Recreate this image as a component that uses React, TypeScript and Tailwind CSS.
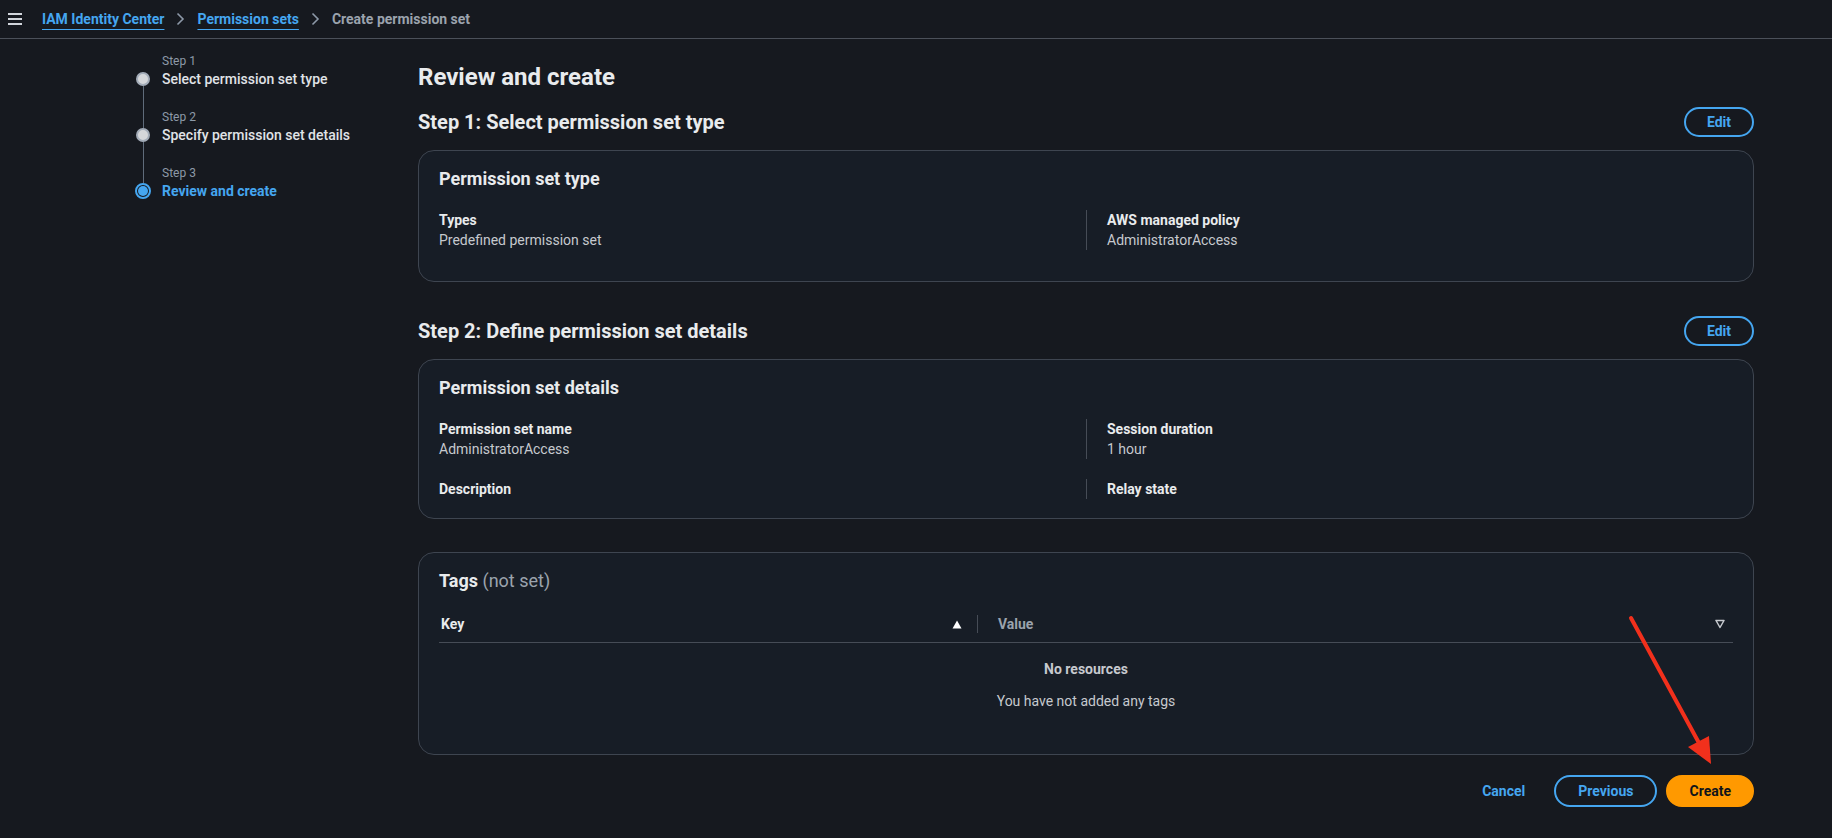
const steps = [
  { label: 'Step 1', title: 'Select permission set type', active: false },
  { label: 'Step 2', title: 'Specify permission set details', active: false },
  { label: 'Step 3', title: 'Review and create', active: true },
];

function Chevron() {
  return (
    <svg width="9" height="14" viewBox="0 0 9 14" className="mx-[12px]">
      <polyline points="1.5,1.5 7,7 1.5,12.5" fill="none" stroke="#8d99a8" strokeWidth="1.6" />
    </svg>
  );
}

function StepNav() {
  return (
    <div className="flex flex-col">
      {steps.map((s, i) => {
        const first = i === 0;
        const last = i === steps.length - 1;
        return (
          <div key={s.label} className="flex">
            <div className="w-4 flex flex-col items-center">
              <div className={`w-px h-4 ${first ? '' : 'bg-[#5f6b7a]'}`} />
              <div className="h-5 flex flex-col items-center">
                <div className={`w-px flex-1 ${first ? '' : 'bg-[#5f6b7a]'}`} />
                {s.active ? (
                  <div className="w-4 h-4 rounded-full border-2 border-[#45a6f0] flex items-center justify-center">
                    <div className="w-2.5 h-2.5 rounded-full bg-[#45a6f0]" />
                  </div>
                ) : (
                  <div className="w-[14px] h-[14px] rounded-full bg-[#d5d7da] border-2 border-[#a3acb8]" />
                )}
                <div className={`w-px flex-1 ${last ? '' : 'bg-[#5f6b7a]'}`} />
              </div>
              {!last && <div className="w-px flex-1 bg-[#5f6b7a]" />}
            </div>
            <div className={`pl-[11px] ${last ? '' : 'pb-5'}`}>
              <div className="text-xs leading-4 text-[#8d99a8]">{s.label}</div>
              <div
                className={`leading-5 ${s.active ? 'font-bold text-[#45a6f0]' : 'font-medium text-[#e0e3e7]'}`}
              >
                {s.title}
              </div>
            </div>
          </div>
        );
      })}
    </div>
  );
}

function EditButton() {
  return (
    <button className="h-[30px] px-[21px] rounded-full border-2 border-[#45a6f0] text-[#45a6f0] font-bold leading-5">
      Edit
    </button>
  );
}

function KV({ k, v, divider }: { k: string; v?: string; divider?: boolean }) {
  return (
    <div className={divider ? 'border-l border-[#464c56] pl-5' : 'pr-5'}>
      <div className="font-bold leading-5 text-[#e9ebed]">{k}</div>
      {v && <div className="leading-5 text-[#c6c9ce]">{v}</div>}
    </div>
  );
}

export default function App() {
  return (
    <div className="relative min-h-screen bg-[#16191f] text-sm text-[#d1d5db] font-[Roboto,sans-serif]">
      <header className="h-[39px] border-b border-[#4b5059] flex items-center pl-2">
        <svg width="14" height="14" viewBox="0 0 14 14">
          <rect x="0" y="1" width="14" height="2" fill="#d1d5db" />
          <rect x="0" y="6" width="14" height="2" fill="#d1d5db" />
          <rect x="0" y="11" width="14" height="2" fill="#d1d5db" />
        </svg>
        <nav className="ml-5 flex items-center font-bold leading-5">
          <a className="text-[#45a6f0] underline underline-offset-[5px] decoration-1">IAM Identity Center</a>
          <Chevron />
          <a className="text-[#45a6f0] underline underline-offset-[5px] decoration-1">Permission sets</a>
          <Chevron />
          <span className="text-[#9ba3ad]">Create permission set</span>
        </nav>
      </header>

      <div className="flex">
        <aside className="w-[418px] shrink-0 pl-[135px] pt-[14px]">
          <StepNav />
        </aside>

        <main className="w-[1336px] shrink-0 pt-[23px]">
          <h1 className="text-2xl leading-[30px] font-bold text-[#e9ebed]">Review and create</h1>

          <div className="mt-[15px] h-[30px] flex items-center justify-between">
            <h2 className="text-xl leading-6 font-bold text-[#e9ebed]">Step 1: Select permission set type</h2>
            <EditButton />
          </div>
          <section className="mt-[13px] rounded-2xl border border-[#3e4550] bg-[#171d26] px-5 pt-[17px] pb-[31px]">
            <h3 className="text-lg leading-[22px] font-bold text-[#e9ebed]">Permission set type</h3>
            <div className="mt-5 grid grid-cols-2">
              <KV k="Types" v="Predefined permission set" />
              <KV k="AWS managed policy" v="AdministratorAccess" divider />
            </div>
          </section>

          <div className="mt-[34px] h-[30px] flex items-center justify-between">
            <h2 className="text-xl leading-6 font-bold text-[#e9ebed]">Step 2: Define permission set details</h2>
            <EditButton />
          </div>
          <section className="mt-[13px] rounded-2xl border border-[#3e4550] bg-[#171d26] px-5 pt-[17px] pb-[19px]">
            <h3 className="text-lg leading-[22px] font-bold text-[#e9ebed]">Permission set details</h3>
            <div className="mt-5 grid grid-cols-2 gap-y-5">
              <KV k="Permission set name" v="AdministratorAccess" />
              <KV k="Session duration" v="1 hour" divider />
              <KV k="Description" />
              <KV k="Relay state" divider />
            </div>
          </section>

          <section className="mt-[33px] rounded-2xl border border-[#3e4550] bg-[#171d26] px-5 pt-[17px] pb-[43px]">
            <h3 className="text-lg leading-[22px] font-bold text-[#e9ebed]">
              Tags <span className="font-normal text-[#9ba3ad]">(not set)</span>
            </h3>
            <div className="mt-[14px] h-[37px] border-b border-[#464c56] flex items-center">
              <div className="w-[538px] flex items-center justify-between pl-[2px] pr-[15px]">
                <span className="font-bold text-[#e9ebed]">Key</span>
                <svg width="10" height="9" viewBox="0 0 10 9">
                  <polygon points="5,0.5 9.5,8.5 0.5,8.5" fill="#ffffff" />
                </svg>
              </div>
              <div className="w-px h-[18px] bg-[#464c56]" />
              <div className="flex-1 flex items-center justify-between pl-[20px] pr-[8px]">
                <span className="font-bold text-[#9ba3ad]">Value</span>
                <svg width="10" height="10" viewBox="0 0 10 10">
                  <polygon points="1,1.5 9,1.5 5,8.5" fill="none" stroke="#c6c9ce" strokeWidth="1.5" strokeLinejoin="round" />
                </svg>
              </div>
            </div>
            <div className="pt-4 flex flex-col items-center gap-3 text-[#c6c9ce] leading-5">
              <div className="font-bold">No resources</div>
              <div>You have not added any tags</div>
            </div>
          </section>

          <div className="mt-[20px] flex items-center justify-end gap-[9px]">
            <button className="px-5 leading-5 font-bold text-[#45a6f0]">Cancel</button>
            <button className="h-8 px-[22px] rounded-full border-2 border-[#45a6f0] text-[#45a6f0] font-bold leading-5">
              Previous
            </button>
            <button className="h-8 px-[21px] rounded-full border-2 border-[#ff9900] bg-[#ff9900] text-[#0f141a] font-bold leading-5">
              Create
            </button>
          </div>
        </main>
      </div>

      {/* red annotation arrow */}
      <svg className="absolute left-[1620px] top-[610px] pointer-events-none" width="100" height="160" viewBox="0 0 100 160">
        <line x1="11" y1="8" x2="79" y2="133" stroke="#f2301c" strokeWidth="4" strokeLinecap="round" />
        <polygon points="91,154 68,137 89,126" fill="#f2301c" />
      </svg>
    </div>
  );
}
